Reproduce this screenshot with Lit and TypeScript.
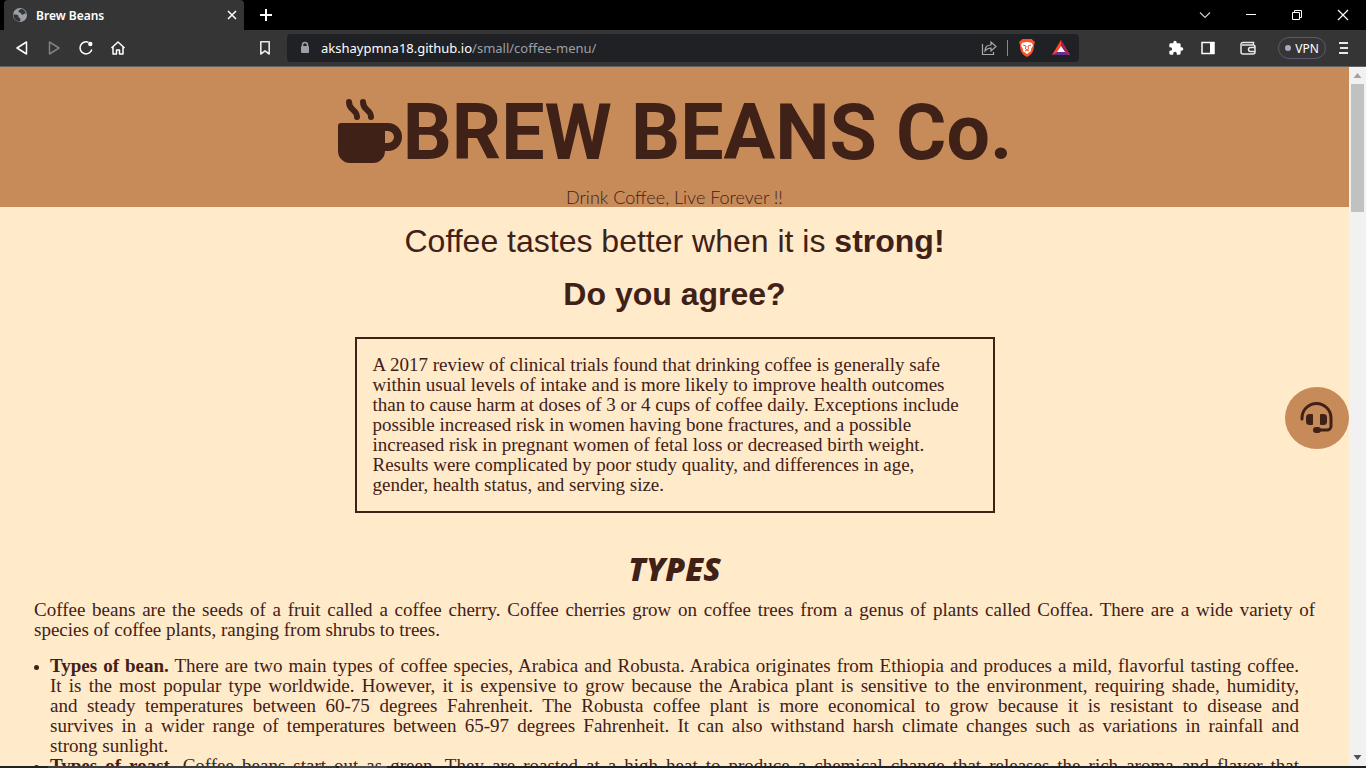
import { LitElement, html, css } from "lit";
import { customElement } from "lit/decorators.js";

@customElement("browser-chrome")
class BrowserChrome extends LitElement {
  static styles = css`
    :host { display: block; font-family: "Noto Sans", "Open Sans", sans-serif; color: #fff; flex: none; }
    svg { display: block; flex: none; }
    button { background: none; border: 0; padding: 0; color: inherit; font: inherit; display: flex; align-items: center; justify-content: center; }
    .strip { display: flex; height: 30px; background: #000; padding-left: 4px; align-items: stretch; }
    .tab { width: 240px; box-sizing: border-box; background: #353535; border-radius: 4px 4px 0 0; display: flex; align-items: center; gap: 8px; padding: 0 6px 0 8px; font-size: 12px; font-weight: 600; }
    .name { flex: 1; }
    .plus { width: 44px; }
    .grow { flex: 1; }
    .win { width: 46px; }
    .bar { display: flex; height: 36px; align-items: center; background: #353535; border-bottom: 1px solid #626262; padding-right: 16px; }
    .nav { display: flex; padding-left: 6px; }
    .nav button { width: 32px; height: 32px; }
    .mark { width: 32px; margin-left: 115px; }
    .url { margin-left: 6px; width: 792px; flex: 0 1 auto; height: 28px; border-radius: 4px; background: #202124; display: flex; align-items: center; box-sizing: border-box; padding: 0 3px 0 12px; gap: 10px; }
    .addr { flex: 1; font-size: 13px; color: #9aa0a6; text-decoration: none; }
    .addr b { font-weight: 400; color: #fff; }
    .sep { width: 1px; height: 16px; background: #8a8a8a; }
    .right { flex: 1; display: flex; align-items: center; justify-content: flex-end; }
    .tools { display: flex; gap: 16px; align-items: center; margin-right: 14px; }
    .tools button { width: 16px; }
    .tools .wallet { width: 32px; }
    .tools .wallet, .vpn { flex: none; }
    .vpn { height: 22px; width: 48px; box-sizing: border-box; border: 1px solid #5b5870; border-radius: 11px; font-size: 12px; gap: 4px; margin-right: 12px; }
    .dot { width: 6px; height: 6px; border-radius: 3px; background: #a9a8be; }
  `;
  render() {
    return html`
      <div class="strip">
        <div class="tab">
          <svg width="16" height="16" viewBox="0 0 16 16"><circle cx="8" cy="8" r="7" fill="#9aa0a6"/><path d="M1.500 7.500c3 0 5 0 5 2s2 1 2 3-1 2-1.500 2.200C3.500 14 1.500 11 1.500 7.500zM9 2c-1 1-3 1-2.500 2.500S9 5 9 6.500s2 1.500 3 .5 1.500 0 2 0C13.500 4 12 2 9 2z" fill="#353535"/></svg>
          <span class="name">Brew Beans</span>
          <button aria-label="Close tab"><svg width="12" height="12" viewBox="0 0 12 12"><path d="M2 2l8 8M10 2l-8 8" stroke="#fff" stroke-width="1.500"/></svg></button>
        </div>
        <button class="plus" aria-label="New tab"><svg width="14" height="14" viewBox="0 0 14 14"><path d="M7 1v12M1 7h12" stroke="#fff" stroke-width="2"/></svg></button>
        <div class="grow"></div>
        <button class="win" aria-label="Search tabs"><svg width="12" height="12" viewBox="0 0 12 12"><path d="M1 3.500l5 5 5-5" fill="none" stroke="#ccc" stroke-width="1.200"/></svg></button>
        <button class="win" aria-label="Minimize"><svg width="12" height="12" viewBox="0 0 12 12"><path d="M1 5.500h10" stroke="#fff"/></svg></button>
        <button class="win" aria-label="Restore"><svg width="12" height="12" viewBox="0 0 12 12"><path d="M1.500 3.500h7v7h-7zM3.500 3.500v-2h7v7h-2" fill="none" stroke="#fff"/></svg></button>
        <button class="win" aria-label="Close"><svg width="12" height="12" viewBox="0 0 12 12"><path d="M1 1l10 10M11 1L1 11" stroke="#fff" stroke-width="1.200"/></svg></button>
      </div>
      <div class="bar">
        <div class="nav">
          <button aria-label="Back"><svg width="16" height="16" viewBox="0 0 16 16"><path d="M12.500 2v12L3 8z" fill="none" stroke="#fff" stroke-width="1.500" stroke-linejoin="round"/></svg></button>
          <button aria-label="Forward"><svg width="16" height="16" viewBox="0 0 16 16"><path d="M3.500 2v12L13 8z" fill="none" stroke="#808080" stroke-width="1.500" stroke-linejoin="round"/></svg></button>
          <button aria-label="Reload"><svg width="16" height="16" viewBox="0 0 16 16"><path d="M10.500 2.400A6 6 0 1 0 13.800 9.500" fill="none" stroke="#fff" stroke-width="1.500"/><circle cx="12.300" cy="4" r="2.200" fill="#fff"/></svg></button>
          <button aria-label="Home"><svg width="16" height="16" viewBox="0 0 16 16"><path d="M1.500 8L8 2l6.500 6M3 7v7h3.500v-4h3v4H13V7" fill="none" stroke="#fff" stroke-width="1.500" stroke-linejoin="round"/></svg></button>
        </div>
        <button class="mark" aria-label="Bookmark"><svg width="16" height="16" viewBox="0 0 16 16"><path d="M3.800 1.800h8.400v12.200L8 10.800 3.800 14z" fill="none" stroke="#e8e8e8" stroke-width="1.600" stroke-linejoin="round"/></svg></button>
        <div class="url">
          <svg width="12" height="14" viewBox="0 0 12 14"><path d="M3.500 6V4a2.500 2.500 0 0 1 5 0v2" fill="none" stroke="#9aa0a6" stroke-width="1.500"/><rect x="2" y="5" width="8" height="7" rx="1" fill="#9aa0a6"/></svg>
          <a class="addr" href="#"><b>akshaypmna18.github.io</b>/small/coffee-menu/</a>
          <svg width="16" height="16" viewBox="0 0 16 16"><path d="M1.500 4v10.500h11V12M4 11c0-4 2-6 6-6V2l5 4.500-5 4.500V8C7 8 5.500 9 4 11z" fill="none" stroke="#aaa" stroke-width="1.200"/></svg>
          <span class="sep"></span>
          <svg width="18" height="20" viewBox="0 0 18 20"><path d="M4.500 1h9L17 4l-1 3c0 6-2 9.500-7 12C4 16.500 2 13 2 7L1 4z" fill="#fb542b"/><path d="M4 5l3-.8L9 4l2 .2 3 .8 1 2.500-2 3.500v2L9 16l-4-3v-2L3 7.500z" fill="#fff"/><path d="M5 7l3 1-.5 3L9 12l1.500-1L10 8l3-1M7 13l2-1 2 1" fill="none" stroke="#fb542b"/></svg>
          <svg width="30" height="18" viewBox="0 0 30 18"><path d="M15 1l9 15H6z" fill="#ff4724"/><path d="M15 1l9 15-9-6z" fill="#9e1f63"/><path d="M6 16l9-5 9 5z" fill="#662d91"/><path d="M15 7l4 6h-8z" fill="#fff"/></svg>
        </div>
        <div class="right">
          <div class="tools">
            <button aria-label="Extensions"><svg width="16" height="16" viewBox="0 0 24 24"><path d="M20.500 11H19V7a2 2 0 0 0-2-2h-4V3.500a2.500 2.500 0 0 0-5 0V5H4a2 2 0 0 0-2 2v3.800h1.500a2.700 2.700 0 0 1 0 5.400H2V20c0 1.100.9 2 2 2h3.800v-1.500a2.700 2.700 0 0 1 5.400 0V22H17a2 2 0 0 0 2-2v-4h1.500a2.500 2.500 0 0 0 0-5z" fill="#fff"/></svg></button>
            <button aria-label="Side panel"><svg width="16" height="16" viewBox="0 0 16 16"><rect x="2" y="2.500" width="12" height="11" fill="none" stroke="#fff" stroke-width="1.500"/><path d="M10 2h4v12h-4z" fill="#fff"/></svg></button>
            <button class="wallet" aria-label="Wallet"><svg width="20" height="16" viewBox="0 0 20 16"><path d="M15.500 5V2.500H5a2 2 0 0 0-2 2V12a2 2 0 0 0 2 2h10a2 2 0 0 0 2-2V7a2 2 0 0 0-2-2H4M17 7.500h-4.500a2 2 0 0 0 0 4H17" fill="none" stroke="#e8e8e8" stroke-width="1.500"/></svg></button>
          </div>
          <button class="vpn"><span class="dot"></span>VPN</button>
          <button aria-label="Menu"><svg width="12" height="14" viewBox="0 0 12 14"><path d="M1 2h9M2 7h8M1 12h9" stroke="#e8e8e8" stroke-width="2"/></svg></button>
        </div>
      </div>`;
  }
}

@customElement("app-root")
class AppRoot extends LitElement {
  static styles = css`
    :host { display: flex; flex-direction: column; height: 100vh; overflow: hidden; color: #3f2118; }
    .view { flex: 1; min-height: 0; display: flex; position: relative; }
    .page { flex: 1; min-width: 0; overflow: hidden; background: #ffeaca; font: 19px/20px "Liberation Serif", serif; }
    .head { background: #c68b59; text-align: center; padding-top: 24px; }
    h1 { margin: 0; display: flex; justify-content: center; align-items: center; font: bold 77px/84px Roboto, sans-serif; }
    h1 svg { flex: none; }
    .tag { margin: 12px 0 0; padding: 0; font: 300 18px/20px Lato, sans-serif; }
    h2 { margin: 0; text-align: center; font: 32px/37px "Liberation Sans", Arial, sans-serif; padding-top: 16px; }
    h2 b { font-weight: bold; }
    .note { box-sizing: border-box; width: 640px; max-width: 90%; margin: 24px auto 0; border: 2px solid #3f2118; padding: 16px; }
    h3 { margin: 36px 0 11px; text-align: center; font: italic 800 32px/40px "Open Sans", sans-serif; }
    .text { padding: 0 34px; }
    .text p { margin: 0 0 16px; }
    .line { display: block; text-align: justify; text-align-last: justify; }
    .line.end { text-align-last: auto; }
    ul { margin: 0; padding: 0 16px; }
    li::marker { font-size: 16px; }
    .chat { position: absolute; right: 17px; top: 320px; width: 64px; height: 62px; padding: 0; border: 0; border-radius: 50%; background: #c68b59; display: grid; place-items: center; }
    .scroll { width: 17px; background: #f1f1f1; display: flex; flex-direction: column; align-items: center; }
    .thumb { width: 13px; height: 128px; background: #c1c1c1; }
    .gap { flex: 1; }
    .task { flex: none; height: 2px; background: #202124; display: flex; gap: 3px; padding-left: 48px; }
    .search { width: 288px; background: #3d3d3d; }
    .item { width: 48px; background: #505050; }
  `;
  render() {
    return html`
      <browser-chrome></browser-chrome>
      <div class="view">
        <main class="page">
          <header class="head">
            <h1><svg width="66" height="68" viewBox="0 0 66 68" fill="#3f2118"><path d="M4 24h47a14 14 0 0 1 0 28h-3a12 12 0 0 1-12 12H13A12 12 0 0 1 1 52V27a3 3 0 0 1 3-3zm44 8v12h3a6 6 0 0 0 0-12z" fill-rule="evenodd"/><path d="M12 3c0 9 8 7 8 15M26 3c0 9 8 7 8 15" fill="none" stroke="#3f2118" stroke-width="6" stroke-linecap="round"/></svg><span>BREW BEANS Co.</span></h1>
            <p class="tag">Drink Coffee, Live Forever !!</p>
          </header>
          <h2>Coffee tastes better when it is <b>strong!</b></h2>
          <h2><b>Do you agree?</b></h2>
          <div class="note">A 2017 review of clinical trials found that drinking coffee is generally safe within usual levels of intake and is more likely to improve health outcomes than to cause harm at doses of 3 or 4 cups of coffee daily. Exceptions include possible increased risk in women having bone fractures, and a possible increased risk in pregnant women of fetal loss or decreased birth weight. Results were complicated by poor study quality, and differences in age,<br>gender, health status, and serving size.</div>
          <h3>TYPES</h3>
          <section class="text">
            <p>
              <span class="line">Coffee beans are the seeds of a fruit called a coffee cherry. Coffee cherries grow on coffee trees from a genus of plants called Coffea. There are a wide variety of</span>
              <span class="line end">species of coffee plants, ranging from shrubs to trees.</span>
            </p>
            <ul>
              <li>
                <span class="line"><b>Types of bean.</b> There are two main types of coffee species, Arabica and Robusta. Arabica originates from Ethiopia and produces a mild, flavorful tasting coffee.</span>
                <span class="line">It is the most popular type worldwide. However, it is expensive to grow because the Arabica plant is sensitive to the environment, requiring shade, humidity,</span>
                <span class="line">and steady temperatures between 60-75 degrees Fahrenheit. The Robusta coffee plant is more economical to grow because it is resistant to disease and</span>
                <span class="line">survives in a wider range of temperatures between 65-97 degrees Fahrenheit. It can also withstand harsh climate changes such as variations in rainfall and</span>
                <span class="line end">strong sunlight.</span>
              </li>
              <li>
                <span class="line"><b>Types of roast.</b> Coffee beans start out as green. They are roasted at a high heat to produce a chemical change that releases the rich aroma and flavor that</span>
              </li>
            </ul>
          </section>
        </main>
        <div class="scroll">
          <svg width="17" height="17" viewBox="0 0 17 17"><path d="M8.500 6l4 5h-8z" fill="#a3a3a3"/></svg>
          <div class="thumb"></div><div class="gap"></div>
          <svg width="17" height="17" viewBox="0 0 17 17"><path d="M8.500 11l4-5h-8z" fill="#505050"/></svg>
        </div>
        <button class="chat" aria-label="Support"><svg width="36" height="36" viewBox="0 0 36 36"><path d="M3 19v-1a14.500 14.500 0 0 1 29 0v8a4 4 0 0 1-4 4H17" fill="none" stroke="#3f2118" stroke-width="3" stroke-linecap="round"/><rect x="7" y="14" width="7" height="11" rx="3.500" fill="#3f2118"/><path d="M10.500 14H13a1 1 0 0 1 1 1v9a1 1 0 0 1-1 1h-2.500zM22 14h2.500v11H22a1 1 0 0 1-1-1v-9a1 1 0 0 1 1-1z" fill="#3f2118"/><rect x="21" y="14" width="7" height="11" rx="3.500" fill="#3f2118"/><rect x="14" y="27" width="8" height="6" rx="3" fill="#3f2118"/></svg></button>
      </div>
      <div class="task"><div class="search"></div><div class="item"></div></div>`;
  }
}
